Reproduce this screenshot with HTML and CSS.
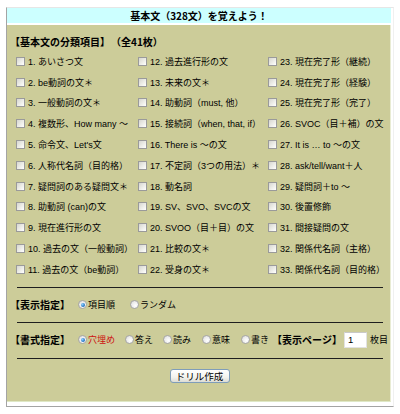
FILE: index.html
```html
<!DOCTYPE html>
<html lang="ja">
<head>
<meta charset="utf-8">
<title>基本文を覚えよう</title>
<link rel="stylesheet" href="styles.css">
</head>
<body>
<div class="frame">
  <div class="head">基本文（328文）を覚えよう！</div>
  <div class="panel">
    <div class="title">【基本文の分類項目】<span class="count">（全41枚）</span></div>
    <div class="grid">
      <div class="item"><span class="cb"></span><span>1. あいさつ文</span></div>
      <div class="item"><span class="cb"></span><span>2. be動詞の文＊</span></div>
      <div class="item"><span class="cb"></span><span>3. 一般動詞の文＊</span></div>
      <div class="item"><span class="cb"></span><span>4. 複数形、How many ～</span></div>
      <div class="item"><span class="cb"></span><span>5. 命令文、Let's文</span></div>
      <div class="item"><span class="cb"></span><span>6. 人称代名詞（目的格）</span></div>
      <div class="item"><span class="cb"></span><span>7. 疑問詞のある疑問文＊</span></div>
      <div class="item"><span class="cb"></span><span>8. 助動詞 (can)の文</span></div>
      <div class="item"><span class="cb"></span><span>9. 現在進行形の文</span></div>
      <div class="item"><span class="cb"></span><span>10. 過去の文（一般動詞）</span></div>
      <div class="item"><span class="cb"></span><span>11. 過去の文（be動詞）</span></div>

      <div class="item"><span class="cb"></span><span>12. 過去進行形の文</span></div>
      <div class="item"><span class="cb"></span><span>13. 未来の文＊</span></div>
      <div class="item"><span class="cb"></span><span>14. 助動詞（must, 他）</span></div>
      <div class="item"><span class="cb"></span><span>15. 接続詞（when, that, if）</span></div>
      <div class="item"><span class="cb"></span><span>16. There is ～の文</span></div>
      <div class="item"><span class="cb"></span><span>17. 不定詞（3つの用法）＊</span></div>
      <div class="item"><span class="cb"></span><span>18. 動名詞</span></div>
      <div class="item"><span class="cb"></span><span>19. SV、SVO、SVCの文</span></div>
      <div class="item"><span class="cb"></span><span>20. SVOO（目＋目）の文</span></div>
      <div class="item"><span class="cb"></span><span>21. 比較の文＊</span></div>
      <div class="item"><span class="cb"></span><span>22. 受身の文＊</span></div>

      <div class="item"><span class="cb"></span><span>23. 現在完了形（継続）</span></div>
      <div class="item"><span class="cb"></span><span>24. 現在完了形（経験）</span></div>
      <div class="item"><span class="cb"></span><span>25. 現在完了形（完了）</span></div>
      <div class="item"><span class="cb"></span><span>26. SVOC（目＋補）の文</span></div>
      <div class="item"><span class="cb"></span><span>27. It is … to ～の文</span></div>
      <div class="item"><span class="cb"></span><span>28. ask/tell/want＋人</span></div>
      <div class="item"><span class="cb"></span><span>29. 疑問詞＋to ～</span></div>
      <div class="item"><span class="cb"></span><span>30. 後置修飾</span></div>
      <div class="item"><span class="cb"></span><span>31. 間接疑問の文</span></div>
      <div class="item"><span class="cb"></span><span>32. 関係代名詞（主格）</span></div>
      <div class="item"><span class="cb"></span><span>33. 関係代名詞（目的格）</span></div>
    </div>

    <div class="rule"></div>

    <div class="opt-row row-order">
      <span class="lbl">【表示指定】</span>
      <span class="radio on first"></span><span class="opt">項目順</span>
      <span class="radio gap15"></span><span class="opt">ランダム</span>
    </div>

    <div class="rule"></div>

    <div class="opt-row row-format">
      <span class="lbl">【書式指定】</span>
      <span class="radio on first"></span><span class="opt red">穴埋め</span>
      <span class="radio gap10"></span><span class="opt">答え</span>
      <span class="radio gap10"></span><span class="opt">読み</span>
      <span class="radio gap11"></span><span class="opt">意味</span>
      <span class="radio gap11"></span><span class="opt">書き</span>
      <span class="lbl page">【表示ページ】</span>
      <span class="page-input">1</span>
      <span class="opt unit">枚目</span>
    </div>

    <div class="rule"></div>

    <div class="btn-row"><span class="btn">ドリル作成</span></div>
  </div>
</div>
</body>
</html>
```

FILE: styles.css
```css
html, body {
  margin: 0;
  padding: 0;
  background: #ffffff;
}
body {
  font-family: "Liberation Sans", "Noto Sans CJK JP", sans-serif;
  color: #000;
}
.frame {
  box-sizing: border-box;
  width: 388px;
  margin: 7px 0 0 6px;
  border-left: 1px solid #a4a4a4;
  border-bottom: 1px solid #a4a4a4;
  border-top: 1px solid #e6e6e6;
  border-right: 1px solid #f0f0f0;
  padding: 0 2px 4px 0;
}
.head {
  height: 15px;
  line-height: 15px;
  background: #ccffff;
  text-align: center;
  font-family: "Noto Sans CJK JP", sans-serif;
  font-size: 10px;
  font-weight: bold;
  margin-bottom: 2px;
}
.panel {
  box-sizing: border-box;
  background: #cccc99;
  border-right: 1px solid #e9ecd4;
  border-bottom: 1px solid #dfe8c6;
  padding: 10px 0 18px 3px;
}
.title {
  font-family: "Noto Sans CJK JP", sans-serif;
  font-size: 10px;
  font-weight: bold;
  line-height: 14px;
  white-space: nowrap;
}
.title .count {
  margin-left: 6px;
}
.grid {
  display: grid;
  grid-template-columns: 122px 130px 1fr;
  grid-template-rows: repeat(11, 20.8px);
  grid-auto-flow: column;
  margin: 2px 0 0 6px;
  font-size: 9px;
}
.item {
  display: flex;
  align-items: center;
  gap: 3px;
  white-space: nowrap;
}
.cb {
  box-sizing: border-box;
  width: 9px;
  height: 9px;
  border: 1px solid #9a9a9a;
  background: linear-gradient(135deg, #d6d6d0 0%, #efefea 60%, #ffffff 100%);
  flex: none;
}
.rule {
  width: 366px;
  height: 0;
  border-top: 1px solid #1e1e1e;
  margin: 7px 0 0 7px;
}
.opt-row {
  display: flex;
  align-items: center;
  white-space: nowrap;
  font-size: 9px;
}
.row-order {
  height: 16px;
  margin-top: 9px;
  margin-bottom: 9px;
}
.row-format {
  height: 18px;
  margin-top: 8px;
  margin-bottom: 9px;
}
.opt-row + .rule {
  margin-top: 0;
}
.lbl {
  font-family: "Noto Sans CJK JP", sans-serif;
  font-size: 10px;
  font-weight: bold;
}
.radio {
  box-sizing: border-box;
  width: 9px;
  height: 9px;
  border-radius: 50%;
  border: 1px solid #a6a6a6;
  background: radial-gradient(circle at 65% 65%, #ffffff 0%, #ececec 55%, #d2d2d2 100%);
  margin-right: 1px;
  flex: none;
  display: flex;
  align-items: center;
  justify-content: center;
}
.radio.on::after {
  content: "";
  width: 4px;
  height: 4px;
  border-radius: 50%;
  background: radial-gradient(circle at 35% 35%, #8fd0ff 0%, #1f6fc0 70%, #0d4f96 100%);
}
.radio.first { margin-left: 8px; }
.radio.gap15 { margin-left: 15px; }
.radio.gap10 { margin-left: 10px; }
.radio.gap11 { margin-left: 11px; }
.opt.red { color: #cc1111; }
.lbl.page { margin-left: 3px; }
.page-input {
  box-sizing: border-box;
  width: 23px;
  height: 16px;
  line-height: 14px;
  margin-left: 2px;
  padding-left: 3px;
  background: #ffffff;
  border: 1px solid #e2e2e2;
  border-top-color: #c8c8c8;
  font-size: 9.5px;
}
.opt.unit { margin-left: 3px; }
.btn-row {
  display: flex;
  justify-content: center;
  margin-top: 10px;
  padding-right: 1px;
}
.btn {
  box-sizing: border-box;
  width: 60px;
  height: 14px;
  line-height: 12px;
  text-align: center;
  font-size: 9.5px;
  font-family: "Noto Sans CJK JP", sans-serif;
  border: 1px solid #7f9db9;
  border-radius: 3px;
  background: linear-gradient(#ffffff 0%, #f3f3ee 60%, #dcdcd4 100%);
}
```
